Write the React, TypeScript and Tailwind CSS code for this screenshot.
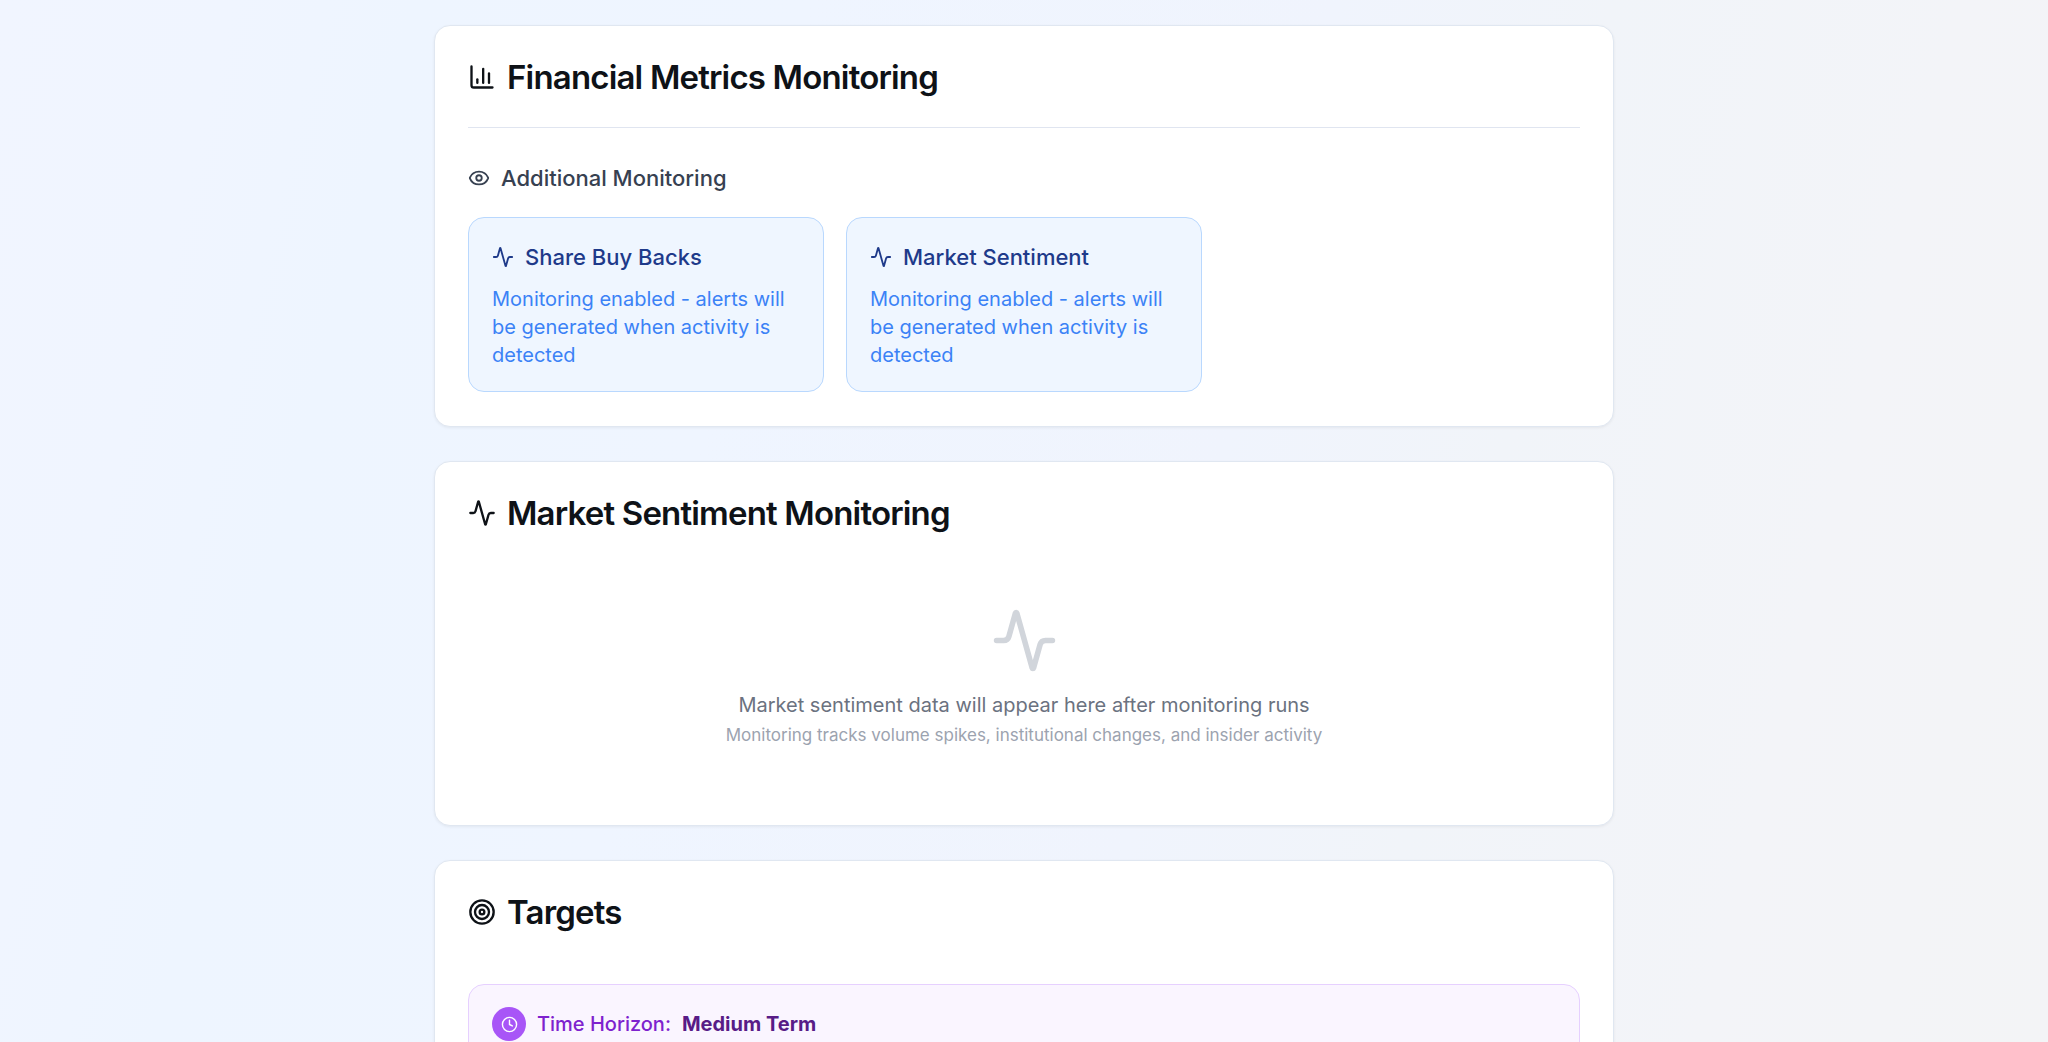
import type { ReactNode } from "react";
import { Activity, ChartColumn, Clock, Eye, Target, type LucideIcon } from "lucide-react";

function Card({ title, icon: Icon, children }: { title: string; icon: LucideIcon; children: ReactNode }) {
  return (
    <section className="rounded-2xl border border-[#e0e7f1] bg-white px-[33px] pb-[34px] shadow-[0_1px_3px_rgba(0,0,0,0.06)]">
      <header className="flex items-center gap-[11px] pt-[34px] pb-[33px]">
        <Icon className="size-7 shrink-0" aria-hidden="true" />
        <h2 className="text-[33px] leading-[34px] font-semibold tracking-tight">{title}</h2>
      </header>
      {children}
    </section>
  );
}

const monitors = ["Share Buy Backs", "Market Sentiment"];

function MonitorTile({ name }: { name: string }) {
  return (
    <article className="rounded-2xl border border-[#b9d8fe] bg-[#eff6ff] px-[23px] py-[22px]">
      <h4 className="mb-[11px] flex items-center gap-[11px] text-[22px] leading-[34px] font-medium text-[#1e3a8a]">
        <Activity className="size-[22px] shrink-0" aria-hidden="true" />
        {name}
      </h4>
      <p className="text-[20px] leading-7 text-[#3b82f6]">
        Monitoring enabled - alerts will be generated when activity is detected
      </p>
    </article>
  );
}

export default function App() {
  return (
    <div className="h-screen overflow-hidden bg-[linear-gradient(104deg,#f1f5ff_0%,#f0f5ff_10%,#eef5ff_18%,#eff5ff_35%,#f0f4fd_58%,#f1f4f9_70%,#f3f4f8_85%,#f3f4f6_100%)] font-['Inter',sans-serif] text-[#0e1217]">
      <main className="mx-auto flex max-w-[1180px] flex-col gap-[34px] pt-[25px]">
        <Card title="Financial Metrics Monitoring" icon={ChartColumn}>
          <div className="border-t border-[#e0e5f0] pt-[33px]">
            <h3 className="mb-[22px] flex items-center gap-[11px] text-[22px] leading-[34px] font-medium text-[#374151]">
              <Eye className="size-[22px] shrink-0" aria-hidden="true" />
              Additional Monitoring
            </h3>
            <div className="grid grid-cols-3 gap-[22px]">
              {monitors.map((name) => (
                <MonitorTile key={name} name={name} />
              ))}
            </div>
          </div>
        </Card>

        <Card title="Market Sentiment Monitoring" icon={Activity}>
          <div className="flex flex-col items-center py-11 text-center">
            <Activity className="mb-[17px] size-[67px] text-[#d1d5db]" aria-hidden="true" />
            <p className="text-[20px] leading-7 text-[#6b7280]">
              Market sentiment data will appear here after monitoring runs
            </p>
            <p className="mt-1 text-[17px] leading-6 text-[#9ca3af]">
              Monitoring tracks volume spikes, institutional changes, and insider activity
            </p>
          </div>
        </Card>

        <Card title="Targets" icon={Target}>
          <div className="mt-[22px] flex items-center gap-[11px] rounded-2xl border border-[#e6d0ff] bg-[#faf5ff] px-[23px] py-[22px] text-[20px] leading-7">
            <span className="flex size-[34px] items-center justify-center rounded-full bg-[#a855f7] text-white">
              <Clock className="size-[17px]" aria-hidden="true" />
            </span>
            <span className="font-medium text-[#7e22ce]">Time Horizon:</span>
            <span className="font-bold text-[#581c87]">Medium Term</span>
          </div>
        </Card>
      </main>
    </div>
  );
}
